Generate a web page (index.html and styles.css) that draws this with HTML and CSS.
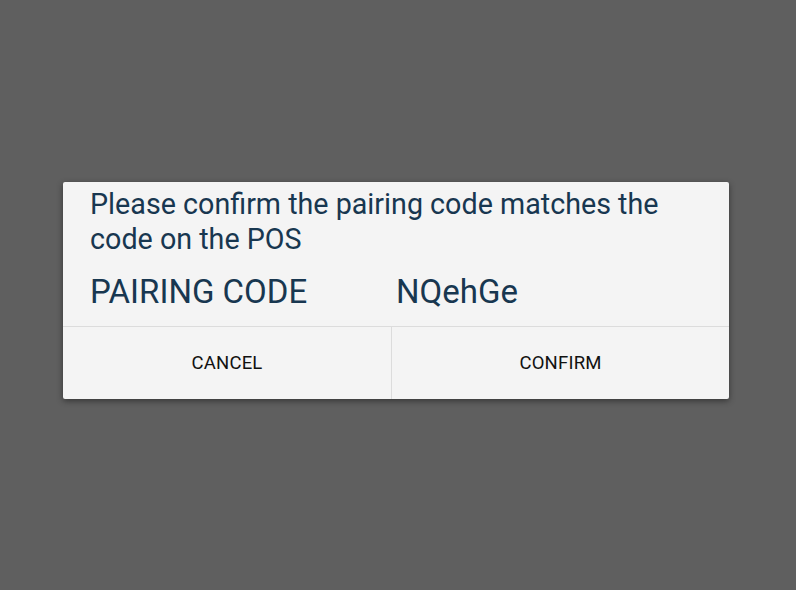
FILE: index.html
```html
<!DOCTYPE html>
<html>
<head>
<meta charset="utf-8">
<link rel="stylesheet" href="styles.css">
</head>
<body>
<div class="screen">
  <div class="dialog">
    <div class="message">Please confirm the pairing code matches the code on the POS</div>
    <div class="code-row">
      <span class="code-label">PAIRING CODE</span>
      <span class="code-value">NQehGe</span>
    </div>
    <div class="actions">
      <div class="btn">CANCEL</div>
      <div class="btn btn-right">CONFIRM</div>
    </div>
  </div>
</div>
</body>
</html>
```
FILE: styles.css
```css
html, body {
  margin: 0;
  padding: 0;
}
body {
  width: 796px;
  height: 590px;
  background: #5f5f5f;
  font-family: Roboto, "Noto Sans", sans-serif;
  overflow: hidden;
}
.screen {
  padding-top: 182px;
  padding-left: 63px;
}
.dialog {
  width: 666px;
  background: #f4f4f4;
  box-shadow: 0 2px 6px rgba(0,0,0,0.45);
  border-radius: 2px;
}
.message {
  padding: 5px 50px 0 27px;
  font-size: 28.7px;
  line-height: 35px;
  color: #183750;
}
.code-row {
  display: flex;
  padding: 0 27px;
  height: 69px;
  align-items: center;
  font-size: 33px;
  color: #183750;
}
.code-label {
  width: 306px;
}
.actions {
  display: flex;
  border-top: 1px solid #dcdcdc;
  height: 72px;
}
.btn {
  flex: 0 0 328px;
  display: flex;
  align-items: center;
  justify-content: center;
  font-size: 18.5px;
  letter-spacing: 0.2px;
  color: #111;
}
.btn-right {
  flex: 1;
  border-left: 1px solid #dcdcdc;
}
```
